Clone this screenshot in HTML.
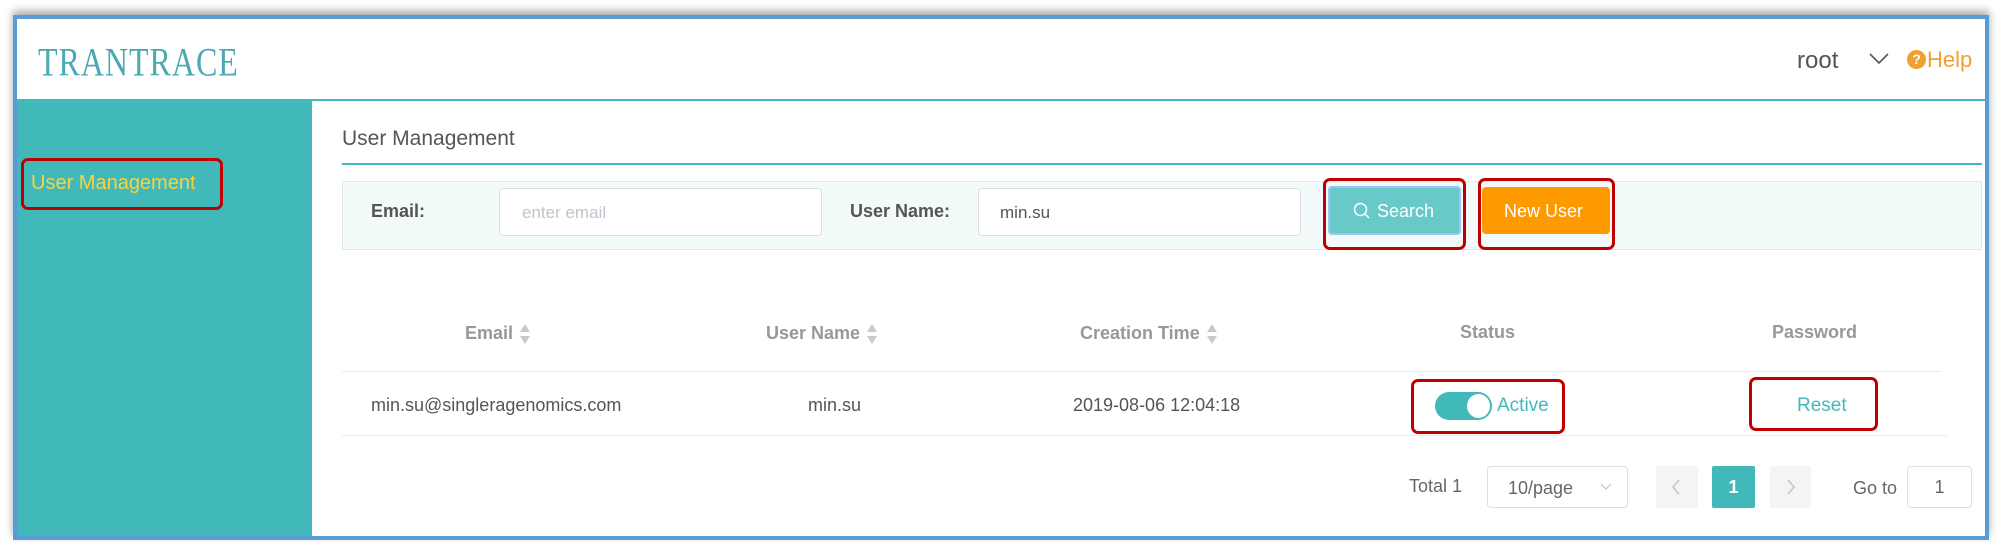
<!DOCTYPE html>
<html><head><meta charset="utf-8"><style>
*{box-sizing:border-box;margin:0;padding:0}
body{width:2008px;height:547px;background:#fff;position:relative;overflow:hidden;font-family:"Liberation Sans",sans-serif}
.a{position:absolute}
.frame{left:13px;top:15px;width:1976px;height:525px;border:4px solid #5B9BD5;box-shadow:0 -4px 8px rgba(0,0,0,.35)}
.red{border:3px solid #C00000;border-radius:7px}
.t{white-space:nowrap;line-height:1}
.hd{color:#8a8d93;font-size:18px;font-weight:bold;opacity:.9}
.sort{display:inline-block;vertical-align:middle;margin-left:6px}
.inp{background:#fff;border:1px solid #dcdfe6;border-radius:4px}
</style></head><body>
<div class="a frame"></div>
<div class="a" style="left:17px;top:99px;width:1968px;height:2px;background:#41B9BA"></div>
<div class="a t" style="left:38px;top:44px;font-family:'Liberation Serif',serif;font-size:33px;color:#4aa9b3;letter-spacing:1px;transform:scale(0.97,1.22);transform-origin:0 0">TRANTRACE</div>
<div class="a t" style="left:1797px;top:49px;font-size:24px;color:#555">root</div>
<svg class="a" style="left:1869px;top:53px" width="20" height="12" viewBox="0 0 20 12"><path d="M1 1 L10 10 L19 1" fill="none" stroke="#555" stroke-width="1.6"/></svg>
<div class="a" style="left:1907px;top:50px;width:19px;height:19px;border-radius:50%;background:#F0A030;color:#fff;font-size:14px;font-weight:bold;text-align:center;line-height:19px">?</div>
<div class="a t" style="left:1927px;top:49px;font-size:22px;color:#F0A030">Help</div>
<div class="a" style="left:17px;top:101px;width:295px;height:435px;background:#41B9BA"></div>
<div class="a red" style="left:21px;top:158px;width:202px;height:52px"></div>
<div class="a t" style="left:31px;top:173px;font-size:20px;color:#F5D442">User Management</div>
<div class="a t" style="left:342px;top:128px;font-size:21px;color:#555">User Management</div>
<div class="a" style="left:342px;top:163px;width:1640px;height:2px;background:#41B9BA"></div>
<div class="a" style="left:342px;top:181px;width:1640px;height:69px;background:#F3FAFA;border:1px solid #e3e8ec"></div>
<div class="a t" style="left:371px;top:202px;font-size:18px;font-weight:bold;color:#555">Email:</div>
<div class="a inp" style="left:499px;top:188px;width:323px;height:48px"></div>
<div class="a t" style="left:522px;top:204px;font-size:17px;color:#c0c4cc">enter email</div>
<div class="a t" style="left:850px;top:202px;font-size:18px;font-weight:bold;color:#555">User Name:</div>
<div class="a inp" style="left:978px;top:188px;width:323px;height:48px"></div>
<div class="a t" style="left:1000px;top:204px;font-size:17px;color:#555">min.su</div>
<div class="a red" style="left:1323px;top:178px;width:143px;height:72px"></div>
<div class="a" style="left:1328px;top:186px;width:133px;height:49px;background:#68C9C9;border:2px solid #9ec5f2;border-radius:4px"></div>
<svg class="a" style="left:1353px;top:202px" width="18" height="18" viewBox="0 0 18 18"><circle cx="7.5" cy="7.5" r="6" fill="none" stroke="#fff" stroke-width="1.5"/><path d="M12 12 L16 16" stroke="#fff" stroke-width="1.5"/></svg>
<div class="a t" style="left:1377px;top:202px;font-size:18px;color:#fff">Search</div>
<div class="a red" style="left:1478px;top:178px;width:137px;height:72px"></div>
<div class="a" style="left:1482px;top:187px;width:128px;height:47px;background:#FF9900;border-radius:4px"></div>
<div class="a t" style="left:1504px;top:202px;font-size:18px;color:#fff">New User</div>
<div class="a t hd" style="left:465px;top:323px">Email<svg class="sort" width="12" height="22" viewBox="0 0 12 22"><path d="M6 1 L11 9 H1Z M6 21 L11 13 H1Z" fill="#c0c4cc"/></svg></div>
<div class="a t hd" style="left:766px;top:323px">User Name<svg class="sort" width="12" height="22" viewBox="0 0 12 22"><path d="M6 1 L11 9 H1Z M6 21 L11 13 H1Z" fill="#c0c4cc"/></svg></div>
<div class="a t hd" style="left:1080px;top:323px">Creation Time<svg class="sort" width="12" height="22" viewBox="0 0 12 22"><path d="M6 1 L11 9 H1Z M6 21 L11 13 H1Z" fill="#c0c4cc"/></svg></div>
<div class="a t hd" style="left:1460px;top:323px">Status</div>
<div class="a t hd" style="left:1772px;top:323px">Password</div>
<div class="a" style="left:342px;top:371px;width:1600px;height:1px;background:#e8ecf0"></div>
<div class="a t" style="left:371px;top:396px;font-size:18px;color:#555">min.su@singleragenomics.com</div>
<div class="a t" style="left:808px;top:396px;font-size:18px;color:#555">min.su</div>
<div class="a t" style="left:1073px;top:396px;font-size:18px;color:#555">2019-08-06 12:04:18</div>
<div class="a red" style="left:1411px;top:379px;width:154px;height:55px"></div>
<div class="a" style="left:1435px;top:392px;width:57px;height:28px;border-radius:14px;background:#41B9BA"></div>
<div class="a" style="left:1467px;top:394px;width:23px;height:24px;border-radius:50%;background:#fff"></div>
<div class="a t" style="left:1497px;top:396px;font-size:19px;color:#41B9BA">Active</div>
<div class="a red" style="left:1749px;top:377px;width:129px;height:54px"></div>
<div class="a t" style="left:1797px;top:396px;font-size:19px;color:#41B9BA">Reset</div>
<div class="a" style="left:342px;top:435px;width:1605px;height:1px;background:#e8ecf0"></div>
<div class="a t" style="left:1409px;top:477px;font-size:18px;color:#666">Total 1</div>
<div class="a inp" style="left:1487px;top:466px;width:141px;height:42px"></div>
<div class="a t" style="left:1508px;top:479px;font-size:18px;color:#666">10/page</div>
<svg class="a" style="left:1600px;top:483px" width="12" height="8" viewBox="0 0 12 8"><path d="M1 1 L6 6 L11 1" fill="none" stroke="#c0c4cc" stroke-width="1.2"/></svg>
<div class="a" style="left:1656px;top:466px;width:42px;height:42px;background:#f4f4f5;border-radius:2px"></div>
<svg class="a" style="left:1671px;top:479px" width="10" height="16" viewBox="0 0 10 16"><path d="M8 1 L2 8 L8 15" fill="none" stroke="#c0c4cc" stroke-width="1.5"/></svg>
<div class="a" style="left:1712px;top:466px;width:43px;height:42px;background:#41B9BA;border-radius:2px;color:#fff;font-weight:bold;font-size:18px;text-align:center;line-height:42px">1</div>
<div class="a" style="left:1770px;top:466px;width:41px;height:42px;background:#f4f4f5;border-radius:2px"></div>
<svg class="a" style="left:1786px;top:479px" width="10" height="16" viewBox="0 0 10 16"><path d="M2 1 L8 8 L2 15" fill="none" stroke="#c0c4cc" stroke-width="1.5"/></svg>
<div class="a t" style="left:1853px;top:479px;font-size:18px;color:#666">Go to</div>
<div class="a inp" style="left:1907px;top:466px;width:65px;height:42px;text-align:center;line-height:40px;font-size:18px;color:#666">1</div>
</body></html>
